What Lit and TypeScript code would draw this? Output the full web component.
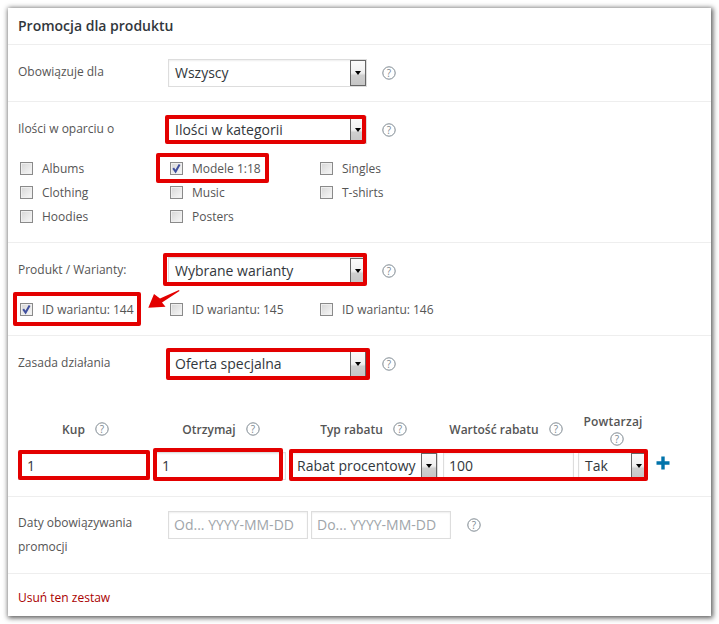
import { LitElement, html, css, svg } from "lit";
import { customElement } from "lit/decorators.js";

const boxes = [
  [165, 115, 201, 29],
  [156, 153, 113, 30],
  [163, 253, 204, 33],
  [13, 292, 128, 34],
  [166, 348, 204, 32],
  [18, 450, 132, 30],
  [153, 448, 130, 33],
  [289, 449, 359, 32],
];

@customElement("app-root")
export class AppRoot extends LitElement {
  static styles = css`
    :host {
      display: block;
      width: 719px;
      height: 624px;
      background: #fff;
      font-family: "Open Sans", sans-serif;
      font-size: 12px;
      color: #555;
      overflow: hidden;
    }
    * { box-sizing: border-box; }
    .stage { position: relative; width: 719px; height: 624px; padding: 8px; }
    .panel {
      width: 703px;
      height: 608px;
      background: #fff;
      box-shadow: 1px 1px 5px 1px rgba(0, 0, 0, 0.65);
    }
    h2 {
      margin: 0;
      height: 37px;
      padding: 0 10px;
      font-size: 14px;
      font-weight: 600;
      line-height: 36px;
      color: #32373c;
      border-bottom: 1px solid #eee;
    }
    section { padding: 14px 10px 14px; border-bottom: 1px solid #eee; }
    section.rule { border-bottom: 0; padding-bottom: 0; }
    section.table { padding: 34px 10px 16px; }
    .row { display: flex; align-items: center; }
    .label { width: 150px; line-height: 24px; color: #555; flex: none; }
    .row.center .label { padding-bottom: 2px; }
    .row.top { align-items: flex-start; }
    .select {
      display: flex;
      width: 199px;
      height: 28px;
      border: 1px solid #ddd;
      box-shadow: inset 0 1px 2px rgba(0, 0, 0, 0.07);
      background: #fff;
      font-size: 14px;
      line-height: 26px;
      color: #32373c;
    }
    .select .txt { flex: 1; padding-left: 6px; white-space: nowrap; overflow: hidden; }
    .btn {
      flex: none;
      width: 16px;
      display: flex;
      align-items: center;
      justify-content: center;
      border: 1px solid #666;
      background: linear-gradient(#fbfbfb 0%, #f0f0f0 50%, #cfcfcf 60%, #c6c6c6 100%);
    }
    .btn i {
      width: 0;
      height: 0;
      border-left: 3.5px solid transparent;
      border-right: 3.5px solid transparent;
      border-top: 4px solid #000;
    }
    .help { flex: none; display: block; margin-left: 15px; }
    .help text {
      font-family: "Open Sans", sans-serif;
      font-size: 10px;
      font-weight: 400;
      fill: #7d8890;
      text-anchor: middle;
    }
    .checks {
      display: grid;
      grid-template-columns: repeat(3, 150px);
      margin-top: 12px;
      padding-left: 2px;
    }
    .check { display: flex; align-items: center; height: 24px; color: #555; white-space: nowrap; }
    .box {
      flex: none;
      width: 13px;
      height: 13px;
      margin-right: 9px;
      border: 1px solid #8a8a8a;
      background: linear-gradient(135deg, #d6d6d6, #f8f8f8);
      box-shadow: inset 0 0 0 1px #efefef;
      display: flex;
    }
    .box svg { display: block; }
    .tbl-head {
      display: grid;
      grid-template-columns: 135px 136px 149px 136px 78px;
      align-items: center;
      height: 34px;
      font-weight: 600;
      color: #555;
    }
    .th { display: flex; align-items: center; justify-content: center; }
    .th .help { margin-left: 10px; }
    .th.stack { flex-direction: column; letter-spacing: 0.2px; line-height: 17px; }
    .th.stack .help { margin: 2px 0 0 8px; }
    .tbl-row {
      display: grid;
      grid-template-columns: 132px 3px 133px 4px 148px 5px 131px 4px 70px 8px auto;
      align-items: center;
      margin-top: 6px;
      height: 28px;
    }
    .inp {
      height: 28px;
      border: 1px solid #ddd;
      box-shadow: inset 0 1px 2px rgba(0, 0, 0, 0.07);
      font-size: 14px;
      line-height: 26px;
      padding-left: 5px;
      color: #32373c;
      background: #fff;
    }
    .inp.qty { padding-left: 8px; }
    .tbl-row .select { width: auto; }
    .plus { color: #0073aa; display: block; margin-top: -7px; }
    .dates { display: flex; align-items: center; gap: 3px; }
    .dates .inp { width: 140px; color: #a0a5aa; }
    .dates .help { margin-left: 13px; }
    .foot { padding: 13px 10px 11px; line-height: 22px; color: #a00; }
    .red {
      position: absolute;
      border: 4px solid #e30000;
      border-radius: 2px;
      pointer-events: none;
    }
    .arrow { position: absolute; left: 145px; top: 288px; }
  `;

  private help() {
    return html`<svg class="help" width="14" height="14" viewBox="0 0 14 14">
      <circle cx="7" cy="7" r="6.2" fill="none" stroke="#7d8890" stroke-width="1"></circle>
      <text x="7" y="10.5">?</text>
    </svg>`;
  }

  private check(label: string, on = false) {
    return html`<div class="check">
      <span class="box">${on
        ? html`<svg width="11" height="11" viewBox="0 0 11 11"><path d="M2.2 5.2 L4.6 8.6 L8.6 1.6" fill="none" stroke="#3f4f9e" stroke-width="2"></path></svg>`
        : ""}</span>${label}
    </div>`;
  }

  private select(t: string) {
    return html`<div class="select"><span class="txt">${t}</span><span class="btn"><i></i></span></div>`;
  }

  render() {
    return html`<div class="stage">
      <div class="panel">
        <h2>Promocja dla produktu</h2>
        <section>
          <div class="row center"><div class="label">Obowiązuje dla</div>${this.select("Wszyscy")}${this.help()}</div>
        </section>
        <section>
          <div class="row center"><div class="label">Ilości w oparciu o</div>${this.select("Ilości w kategorii")}${this.help()}</div>
          <div class="checks">
            ${this.check("Albums")}${this.check("Modele 1:18", true)}${this.check("Singles")}
            ${this.check("Clothing")}${this.check("Music")}${this.check("T-shirts")}
            ${this.check("Hoodies")}${this.check("Posters")}
          </div>
        </section>
        <section>
          <div class="row center"><div class="label">Produkt / Warianty:</div>${this.select("Wybrane warianty")}${this.help()}</div>
          <div class="checks">
            ${this.check("ID wariantu: 144", true)}${this.check("ID wariantu: 145")}${this.check("ID wariantu: 146")}
          </div>
        </section>
        <section class="rule">
          <div class="row center"><div class="label">Zasada działania</div>${this.select("Oferta specjalna")}${this.help()}</div>
        </section>
        <section class="table">
          <div class="tbl-head">
            <div class="th">Kup${this.help()}</div>
            <div class="th">Otrzymaj${this.help()}</div>
            <div class="th">Typ rabatu${this.help()}</div>
            <div class="th">Wartość rabatu${this.help()}</div>
            <div class="th stack">Powtarzaj${this.help()}</div>
          </div>
          <div class="tbl-row">
            <div class="inp qty">1</div><span></span>
            <div class="inp qty">1</div><span></span>
            ${this.select("Rabat procentowy")}<span></span>
            <div class="inp">100</div><span></span>
            ${this.select("Tak")}<span></span>
            <svg class="plus" width="14" height="14" viewBox="0 0 14 14"><path d="M7 0.5V13.5M0.5 7H13.5" stroke="currentColor" stroke-width="3.4" fill="none"></path></svg>
          </div>
        </section>
        <section>
          <div class="row top">
            <div class="label">Daty obowiązywania<br />promocji</div>
            <div class="dates">
              <div class="inp">Od... YYYY-MM-DD</div>
              <div class="inp">Do... YYYY-MM-DD</div>
              ${this.help()}
            </div>
          </div>
        </section>
        <div class="foot">Usuń ten zestaw</div>
      </div>
      ${boxes.map(
        ([x, y, w, h]) => html`<div class="red" style="left:${x}px;top:${y}px;width:${w}px;height:${h}px"></div>`
      )}
      <svg class="arrow" width="38" height="24" viewBox="0 0 38 24">
        ${svg`<polygon points="3.3,19.8 9,6 15,10.5 34,2 34.5,3 17,14.5 20.5,18.7" fill="#e30000"></polygon>`}
      </svg>
    </div>`;
  }
}
